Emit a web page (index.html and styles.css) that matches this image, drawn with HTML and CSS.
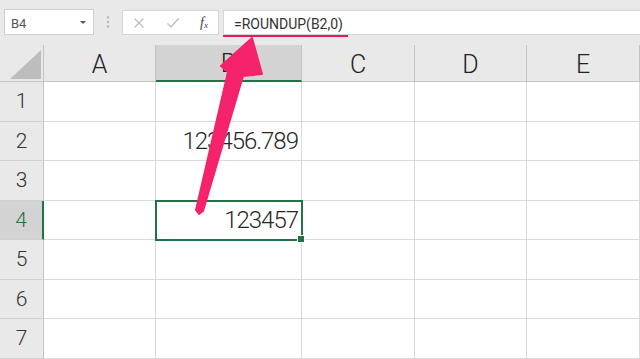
FILE: index.html
```html
<!DOCTYPE html>
<html lang="ja">
<head>
    <meta charset="UTF-8">
    <title>ROUNDUP</title>
    <link rel="stylesheet" href="styles.css">
</head>
<body>
    <div class="app">
        <div class="formula-bar">
            <div class="name-box">
                <span class="name">B4</span>
                <span class="caret"></span>
            </div>
            <div class="grip">
                <svg width="4" height="12" viewBox="0 0 4 12">
                    <circle cx="2" cy="1.5" r="1.2" fill="#b8b8b8"/>
                    <circle cx="2" cy="6" r="1.2" fill="#b8b8b8"/>
                    <circle cx="2" cy="10.5" r="1.2" fill="#b8b8b8"/>
                </svg>
            </div>
            <div class="tools">
                <svg class="tool" width="12" height="12" viewBox="0 0 12 12">
                    <path d="M1.5 1.5 L10.5 10.5 M10.5 1.5 L1.5 10.5" stroke="#bdbdbd" stroke-width="1.3" fill="none"/>
                </svg>
                <svg class="tool" width="14" height="12" viewBox="0 0 14 12">
                    <path d="M1.5 6.5 L5 10 L12.5 1.5" stroke="#bdbdbd" stroke-width="1.4" fill="none"/>
                </svg>
                <span class="fx">f<sub>x</sub></span>
            </div>
            <div class="formula">
                <span class="formula-text">=ROUNDUP(B2,0)</span>
            </div>
        </div>

        <div class="sheet">
            <div class="corner"><div class="corner-mark"></div></div>
            <div class="col-head">A</div>
            <div class="col-head active">B</div>
            <div class="col-head">C</div>
            <div class="col-head">D</div>
            <div class="col-head">E</div>

            <div class="row-head">1</div>
            <div class="cell"></div><div class="cell"></div><div class="cell"></div><div class="cell"></div><div class="cell"></div>

            <div class="row-head">2</div>
            <div class="cell"></div><div class="cell num">123456.789</div><div class="cell"></div><div class="cell"></div><div class="cell"></div>

            <div class="row-head">3</div>
            <div class="cell"></div><div class="cell"></div><div class="cell"></div><div class="cell"></div><div class="cell"></div>

            <div class="row-head active">4</div>
            <div class="cell"></div><div class="cell num selected">123457</div><div class="cell"></div><div class="cell"></div><div class="cell"></div>

            <div class="row-head">5</div>
            <div class="cell"></div><div class="cell"></div><div class="cell"></div><div class="cell"></div><div class="cell"></div>

            <div class="row-head">6</div>
            <div class="cell"></div><div class="cell"></div><div class="cell"></div><div class="cell"></div><div class="cell"></div>

            <div class="row-head">7</div>
            <div class="cell"></div><div class="cell"></div><div class="cell"></div><div class="cell"></div><div class="cell"></div>
        </div>

        <!-- annotation arrow pointing from B4 up to the formula -->
        <svg class="arrow" width="640" height="359" viewBox="0 0 640 359">
            <polygon points="252,38 262,74 243,76 203,211 199,214 196,210 228,72 221,66"
                fill="#f5236b" stroke="#f5236b" stroke-width="2" stroke-linejoin="round"/>
        </svg>
    </div>
</body>
</html>
```

FILE: styles.css
```css
* {
    padding: 0;
    margin: 0;
    box-sizing: border-box;
}

html,
body {
    width: 640px;
    height: 359px;
    overflow: hidden;
}

body {
    background: #e9e9e9;
    font-family: Roboto, "Noto Sans CJK JP", sans-serif;
    color: #262626;
}

.app {
    position: relative;
    width: 640px;
    height: 359px;
}

/* formula bar */

.formula-bar {
    height: 45px;
    display: flex;
    align-items: flex-start;
    padding: 9px 0 0 4px;
}

.name-box {
    width: 90px;
    height: 26px;
    background: white;
    border: #cfcfcf solid 1px;
    display: flex;
    align-items: center;
    justify-content: space-between;
    padding: 0 7px 0 6px;
}

.name {
    font-size: 13px;
    color: #555;
    padding-top: 2px;
}

.caret {
    width: 0;
    height: 0;
    border-left: 3px solid transparent;
    border-right: 3px solid transparent;
    border-top: 3px solid #555;
}

.grip {
    width: 28px;
    height: 26px;
    display: flex;
    align-items: center;
    justify-content: center;
}

.tools {
    width: 97px;
    height: 25px;
    margin-top: 1px;
    background: white;
    border: #d6d6d6 solid 1px;
    display: flex;
    align-items: center;
    padding-left: 10px;
}

.tool {
    margin-right: 21px;
}

.tool + .tool {
    margin-right: 20px;
}

.fx {
    font-family: "Liberation Serif", serif;
    font-style: italic;
    font-size: 14px;
    color: #444;
}

.fx sub {
    font-size: 9px;
    vertical-align: -1px;
}

.formula {
    flex: 1;
    height: 25px;
    margin: 1px 0 0 4px;
    background: white;
    border: #d6d6d6 solid 1px;
    border-right: none;
    padding-top: 3px;
}

.formula-text {
    display: inline-block;
    font-size: 14px;
    line-height: 16px;
    color: #333;
    padding: 0 5px 3px 11px;
    margin-left: -1px;
    border-bottom: #e5195f solid 2px;
}

/* grid */

.sheet {
    display: grid;
    grid-template-columns: 44px 112px 146px 113px 112px 113px;
    grid-template-rows: 37px repeat(7, 39.5px);
    background: white;
}

.corner {
    background: #e9e9e9;
    border-right: #c3c3c3 solid 1px;
    border-bottom: #c3c3c3 solid 1px;
    display: flex;
    align-items: flex-end;
    justify-content: flex-end;
    padding: 0 2px 2px 0;
}

.corner-mark {
    width: 31px;
    height: 29px;
    background: #bdbdbd;
    clip-path: polygon(100% 0, 100% 100%, 0 100%);
}

.col-head {
    background: #e9e9e9;
    border-right: #c3c3c3 solid 1px;
    border-bottom: #c3c3c3 solid 1px;
    display: flex;
    align-items: center;
    justify-content: center;
    font-size: 25px;
    font-weight: 300;
    color: #222;
    padding-top: 2px;
}

.col-head.active {
    background: #d3d3d3;
    border-bottom: #217346 solid 2px;
}

.row-head {
    background: #e9e9e9;
    border-right: #c3c3c3 solid 1px;
    border-bottom: #d0d0d0 solid 1px;
    display: flex;
    align-items: center;
    justify-content: center;
    font-size: 21px;
    font-weight: 300;
    color: #333;
}

.row-head.active {
    background: #d3d3d3;
    border-right: #217346 solid 2px;
    color: #217346;
}

.cell {
    border-right: #dadada solid 1px;
    border-bottom: #dadada solid 1px;
}

.num {
    display: flex;
    align-items: center;
    justify-content: flex-end;
    padding-right: 3px;
    font-size: 24px;
    font-weight: 300;
    letter-spacing: -1px;
    color: #262626;
}

.selected {
    position: relative;
    z-index: 1;
    outline: #217346 solid 2px;
    outline-offset: -1px;
}

.selected::after {
    content: '';
    position: absolute;
    right: -4px;
    bottom: -4px;
    width: 6px;
    height: 6px;
    background: #217346;
    border: white solid 1px;
}

.arrow {
    position: absolute;
    top: 0;
    left: 0;
    z-index: 2;
    pointer-events: none;
}
```
